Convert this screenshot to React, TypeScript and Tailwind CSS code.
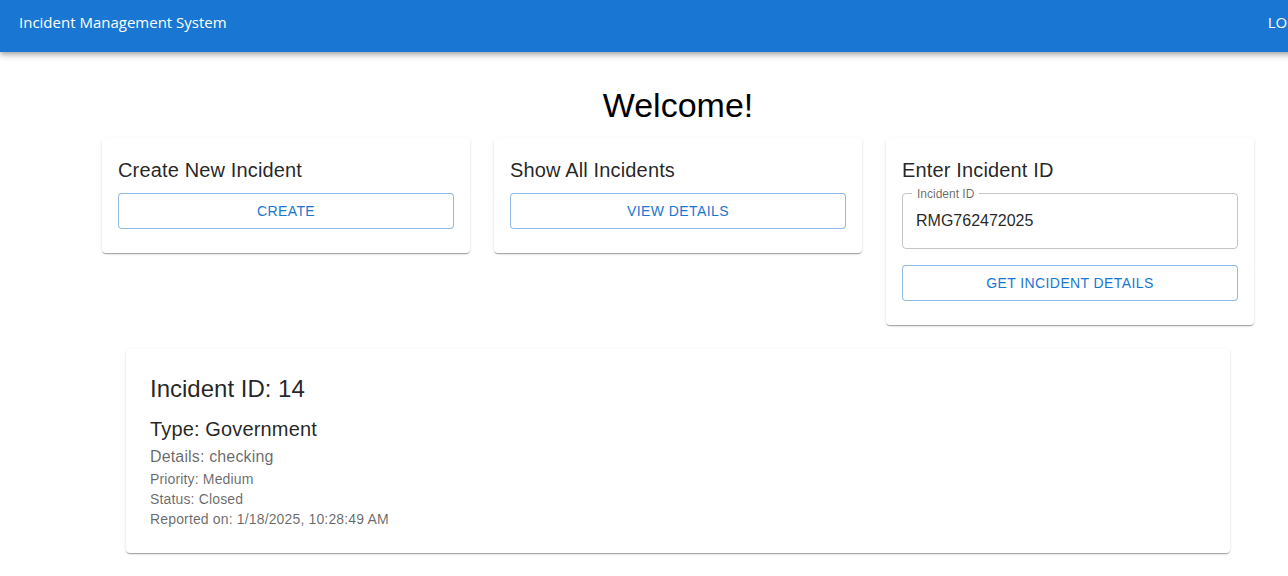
import { useState } from 'react';

const cardShadow =
    'shadow-[0px_2px_1px_-1px_rgba(0,0,0,0.2),0px_1px_1px_0px_rgba(0,0,0,0.14),0px_1px_3px_0px_rgba(0,0,0,0.12)]';

const OutlinedButton = ({ label }: { label: string }) => (
    <button
        type="button"
        className="flex h-9 w-full items-center justify-center rounded border border-[rgba(25,118,210,0.5)] bg-white text-sm font-medium uppercase tracking-[0.4px] text-[#1976d2] hover:bg-[rgba(25,118,210,0.04)]"
    >
        {label}
    </button>
);

const ActionCard = ({ title, children }: { title: string; children: React.ReactNode }) => (
    <div className={`rounded bg-white ${cardShadow}`}>
        <div className="px-4 pb-6 pt-4">
            <h6 className="mb-[7px] text-xl leading-8 tracking-[0.15px] text-[rgba(0,0,0,0.87)]">{title}</h6>
            {children}
        </div>
    </div>
);

const App = () => {
    const [incidentId, setIncidentId] = useState('RMG762472025');

    return (
        <div className="w-full overflow-hidden bg-white [font-family:'Liberation_Sans',Arial,sans-serif]">
            <div className="min-h-[576px] w-[1356px]">
                <header className="relative z-10 flex h-[52px] items-start justify-between bg-[#1976d2] pl-[19px] pr-[19px] pt-[10px] text-white shadow-[0px_2px_4px_-1px_rgba(0,0,0,0.2),0px_4px_5px_0px_rgba(0,0,0,0.14),0px_1px_10px_0px_rgba(0,0,0,0.12)]">
                    <span className="[font-family:'Open_Sans',sans-serif] text-[15px] leading-6">
                        Incident Management System
                    </span>
                    <button
                        type="button"
                        className="px-2 [font-family:'Open_Sans',sans-serif] text-[15px] uppercase leading-6"
                    >
                        Logout
                    </button>
                </header>

                <main className="mx-auto w-[1200px] px-6">
                    <h4 className="mt-8 text-center text-[34px] leading-[42px] text-black">Welcome!</h4>

                    <div className="mt-3 grid grid-cols-3 items-start gap-6">
                        <ActionCard title="Create New Incident">
                            <OutlinedButton label="Create" />
                        </ActionCard>
                        <ActionCard title="Show All Incidents">
                            <OutlinedButton label="View Details" />
                        </ActionCard>
                        <ActionCard title="Enter Incident ID">
                            <div className="relative mb-4 h-14 rounded border border-[rgba(0,0,0,0.23)]">
                                <span className="absolute left-[9px] top-0 -translate-y-1/2 bg-white px-[5px] text-xs leading-4 text-[rgba(0,0,0,0.6)]">
                                    Incident ID
                                </span>
                                <input
                                    value={incidentId}
                                    onChange={(e) => setIncidentId(e.target.value)}
                                    className="h-full w-full bg-transparent px-[13px] text-base text-[rgba(0,0,0,0.87)] outline-none"
                                />
                            </div>
                            <OutlinedButton label="Get Incident Details" />
                        </ActionCard>
                    </div>

                    <div className={`mx-6 mt-6 rounded bg-white p-6 ${cardShadow}`}>
                        <h5 className="mb-2 text-2xl leading-8 text-[rgba(0,0,0,0.87)]">Incident ID: 14</h5>
                        <h6 className="text-xl leading-8 tracking-[0.15px] text-[rgba(0,0,0,0.87)]">Type: Government</h6>
                        <p className="text-base leading-6 tracking-[0.15px] text-[rgba(0,0,0,0.6)]">Details: checking</p>
                        <p className="text-sm leading-5 tracking-[0.15px] text-[rgba(0,0,0,0.6)]">Priority: Medium</p>
                        <p className="text-sm leading-5 tracking-[0.15px] text-[rgba(0,0,0,0.6)]">Status: Closed</p>
                        <p className="text-sm leading-5 tracking-[0.15px] text-[rgba(0,0,0,0.6)]">Reported on: 1/18/2025, 10:28:49 AM</p>
                    </div>
                </main>
            </div>
        </div>
    );
};

export default App;
